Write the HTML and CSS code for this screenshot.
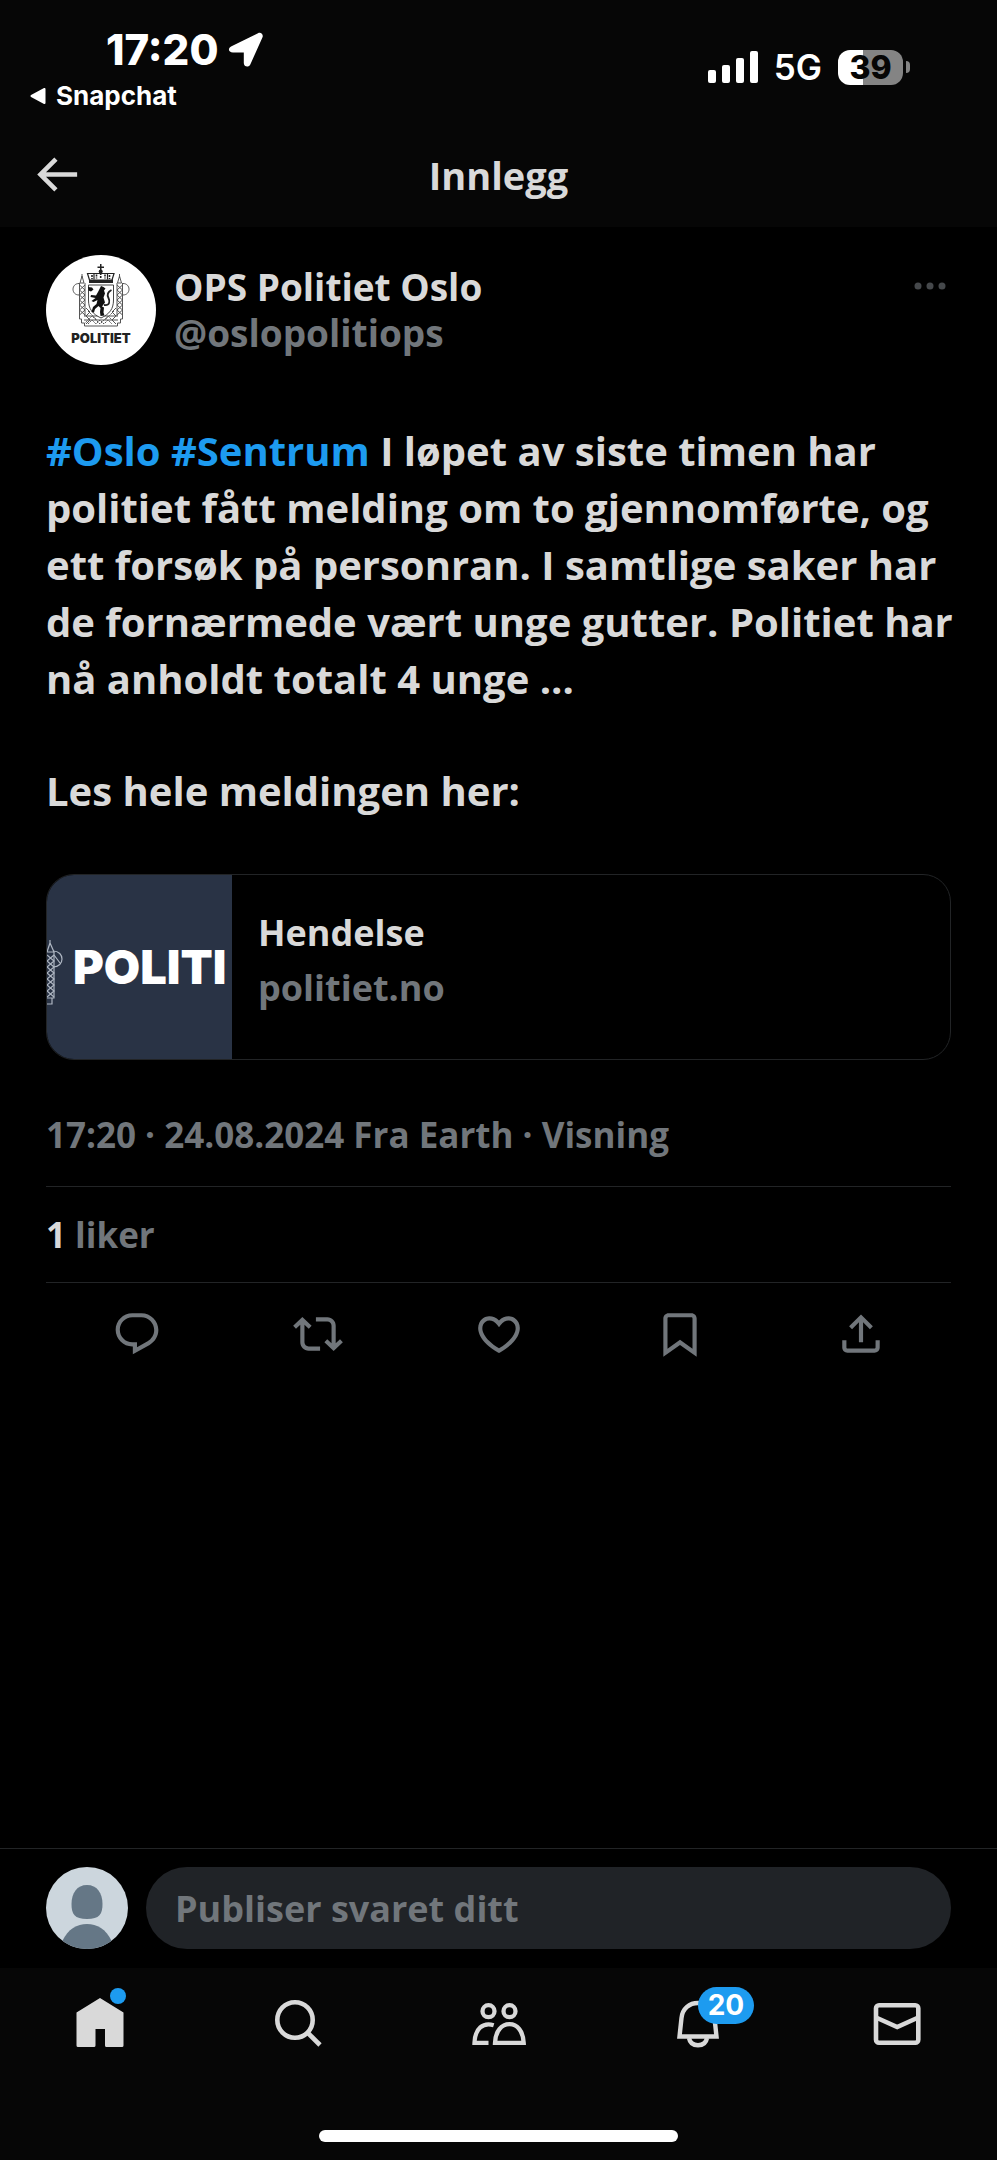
FILE: index.html
```html
<!DOCTYPE html>
<html lang="no">

<head>
  <meta charset="UTF-8">
  <meta name="viewport" content="width=device-width, initial-scale=1.0">
  <title>Innlegg</title>
  <link rel="stylesheet" href="styles.css">
</head>

<body>
  <header class="top">
    <div class="status-bar">
      <div class="status-left">
        <div class="clock">
          <span>17:20</span>
          <svg width="36" height="36" viewBox="0 0 36 36" aria-hidden="true">
            <path d="M3.500 14.200 30 1.200c3-1.400 5.800 1.300 4.400 4.400L22.300 32.500c-1.600 3.400-6.500 2.500-6.500-1.500V20.500H5C.4 20.500-.6 16.200 3.500 14.200z" fill="#fff"/>
          </svg>
        </div>
        <a href="#" class="back-app">
          <svg width="16" height="16" viewBox="0 0 16 16" aria-hidden="true">
            <path d="M14.500 1v14L1.500 8z" fill="#fff" stroke="#fff" stroke-width="2" stroke-linejoin="round"/>
          </svg>
          <span>Snapchat</span>
        </a>
      </div>
      <div class="status-right">
        <svg width="50" height="32" viewBox="0 0 50 32" fill="#fff" aria-hidden="true">
          <rect x="0" y="19" width="8" height="13" rx="2"/>
          <rect x="14" y="14" width="8" height="18" rx="2"/>
          <rect x="28" y="7" width="8" height="25" rx="2"/>
          <rect x="42" y="0" width="8" height="32" rx="2"/>
        </svg>
        <span class="network">5G</span>
        <div class="battery">
          <span class="battery-level">39</span>
          <span class="battery-tip"></span>
        </div>
      </div>
    </div>

    <div class="title-bar">
      <button class="icon-button" aria-label="Tilbake">
        <svg width="55" height="55" viewBox="0 0 24 24" fill="currentColor">
          <path d="M7.414 13l5.043 5.040-1.414 1.420L3.586 12l7.457-7.460 1.414 1.420L7.414 11H21v2H7.414z"/>
        </svg>
      </button>
      <h1>Innlegg</h1>
    </div>
  </header>

  <main class="post">
    <div class="author">
      <svg class="avatar" width="110" height="110" viewBox="0 0 110 110" role="img" aria-label="Politiet">
        <circle cx="55" cy="55" r="55" fill="#fff"/>
        <!-- crown -->
        <g fill="#222">
          <path d="M54 9h1.500v2.500H58V13h-2.500v2.500H54V13h-2.500v-1.500H54z"/>
          <circle cx="54.700" cy="16.500" r="2"/>
          <path d="M43 24.500h24v3.500H43z"/>
        </g>
        <path d="M43.500 25 41.500 18.500h26.500L66 25M48 18.500v6M61.500 18.500v6" fill="none" stroke="#222" stroke-width="1.200"/>
        <path d="M46 20v4M50.500 19.500v4M54.700 18v6M59 19.500v4M63.500 20v4" stroke="#222" stroke-width="1.600" stroke-dasharray="2 1"/>
        <!-- fasces, axes and lower lattice -->
        <g fill="none" stroke="#555" stroke-width="1">
          <path d="M36 19v4M34 28l2-7 2 7zM73.500 19v4M71.500 28l2-7 2 7z"/>
          <path d="M33.500 28v33M39 28v33M71 28v33M76.500 28v33"/>
          <path d="M33.500 30l5.500 5-5.500 5 5.500 5-5.500 5 5.500 5-5.500 5M39 30l-5.500 5 5.500 5-5.500 5 5.500 5-5.500 5 5.500 5M71 30l5.500 5-5.500 5 5.500 5-5.500 5 5.500 5-5.500 5M76.500 30l-5.500 5 5.500 5-5.500 5 5.500 5-5.500 5 5.500 5"/>
          <path d="M33 28.500c-8 0-8 11.500 0 11.500M77 28.500c8 0 8 11.500 0 11.500"/>
          <path d="M33.500 61v3h2v4h3v3h33v-3h3v-4h2v-3"/>
          <path d="M38 61h34M38 65h34M40 53l4 4-4 4 4 4-4 4M70 53l-4 4 4 4-4 4 4 4"/>
          <path d="M38 69l4-4 4-4 4 4 4 4 4-4 4-4 4 4 4 4M42 69l4-4 4 4 4-4 4 4 4-4 4 4M42 56l5 5 4 4M68 56l-5 5-4 4" stroke-dasharray="2 1"/>
        </g>
        <!-- shield with lion -->
        <path d="M42.500 30h25v15c0 9-4 14-12.500 18-8.500-4-12.500-9-12.500-18z" fill="#fff" stroke="#444" stroke-width="1"/>
        <path d="M55 31l2.500 1 2 1.500-1.500 2 1 3-1.500 4 1.500 5-3 4 2 1-.5 5 1 3-4 .5-.5-4 .5-4-2-2-3.500 3-1 3.500-2.500-.5 1.500-5 3.500-3 1-4-4 2-2-1 4-3-5-1 .5-2 5 .5 2-3.500z" fill="#111"/>
        <path d="M42 32l4 .5 1.500 2-2.500 2-2.500-1z" fill="#111"/>
        <path d="M58 50c6 1 6-4 4.500-7-1.500-3-1-6 3-8" fill="none" stroke="#222" stroke-width="1.800"/>
        <text class="logo-small" x="55" y="88" text-anchor="middle">POLITIET</text>
      </svg>
      <div class="names">
        <a href="#" class="name">OPS Politiet Oslo</a>
        <a href="#" class="handle">@oslopolitiops</a>
      </div>
      <button class="icon-button more" aria-label="Mer">
        <svg width="34" height="10" viewBox="0 0 34 10" fill="#45484b">
          <circle cx="5" cy="5" r="3.500"/>
          <circle cx="17" cy="5" r="3.500"/>
          <circle cx="29" cy="5" r="3.500"/>
        </svg>
      </button>
    </div>

    <div class="text">
      <p><a href="#">#Oslo</a> <a href="#">#Sentrum</a> I løpet av siste timen har politiet fått melding om to gjennomførte, og ett forsøk på personran. I samtlige saker har de fornærmede vært unge gutter. Politiet har nå anholdt totalt 4 unge ...</p>
      <p>Les hele meldingen her:</p>
    </div>

    <a href="#" class="link-card">
      <svg class="thumb" width="185" height="184" viewBox="0 0 185 184" role="img" aria-label="Politiet">
        <rect width="185" height="184" fill="#293345"/>
        <g fill="none" stroke="#aeb6c2" stroke-width="1.200">
          <path d="M3 65v5M0 77l3-9 4 9zM0 77h7v46H0M5 123v6H0"/>
          <path d="M0 80l7 6-7 6 7 6-7 6 7 6-7 6 7 6M7 80l-7 6 7 6-7 6 7 6-7 6 7 6-7 6"/>
          <path d="M6 76c12 0 12 16 0 16M7 80l6 8"/>
        </g>
        <text class="logo-large" x="26" y="109">POLITI</text>
      </svg>
      <div class="link-info">
        <span class="link-title">Hendelse</span>
        <span class="link-domain">politiet.no</span>
      </div>
    </a>

    <div class="meta">17:20 · 24.08.2024 Fra Earth · Visning</div>
    <div class="likes"><strong>1</strong> liker</div>

    <div class="actions">
      <button class="icon-button" aria-label="Svar">
        <svg width="50" height="50" viewBox="0 0 24 24" fill="currentColor">
          <path d="M1.751 10c0-4.420 3.584-8 8.005-8h4.366c4.490 0 8.129 3.640 8.129 8.130 0 2.960-1.607 5.680-4.196 7.110l-8.054 4.460v-3.690h-.067c-4.490.1-8.183-3.510-8.183-8.010zm8.005-6c-3.317 0-6.005 2.690-6.005 6 0 3.370 2.770 6.080 6.138 6.010l.351-.010h1.761v2.300l5.087-2.810c1.951-1.080 3.163-3.130 3.163-5.360 0-3.390-2.744-6.130-6.129-6.130H9.756z"/>
        </svg>
      </button>
      <button class="icon-button" aria-label="Del på nytt">
        <svg width="50" height="50" viewBox="0 0 24 24" fill="currentColor">
          <path d="M4.500 3.880l4.432 4.140-1.364 1.460L5.500 7.550V16c0 1.100.896 2 2 2H13v2H7.500c-2.209 0-4-1.790-4-4V7.550L1.432 9.480.068 8.020 4.500 3.880zM16.500 6H11V4h5.500c2.209 0 4 1.790 4 4v8.450l2.068-1.930 1.364 1.460-4.432 4.140-4.432-4.140 1.364-1.460 2.068 1.930V8c0-1.100-.896-2-2-2z"/>
        </svg>
      </button>
      <button class="icon-button" aria-label="Lik">
        <svg width="50" height="50" viewBox="0 0 24 24" fill="currentColor">
          <path d="M16.697 5.500c-1.222-.06-2.679.51-3.890 2.160l-.805 1.090-.806-1.090C9.984 6.010 8.526 5.440 7.304 5.500c-1.243.07-2.349.78-2.910 1.910-.552 1.120-.633 2.780.479 4.820 1.074 1.970 3.257 4.270 7.129 6.610 3.870-2.340 6.052-4.640 7.126-6.610 1.111-2.040 1.030-3.700.477-4.820-.561-1.130-1.666-1.840-2.908-1.910zm4.187 7.690c-1.351 2.480-4.001 5.120-8.379 7.670l-.503.3-.504-.3c-4.379-2.550-7.029-5.190-8.382-7.670-1.360-2.500-1.410-4.860-.514-6.670.887-1.790 2.647-2.910 4.601-3.010 1.651-.09 3.368.56 4.798 2.010 1.429-1.450 3.146-2.100 4.796-2.010 1.954.1 3.714 1.220 4.601 3.010.896 1.810.846 4.170-.514 6.670z"/>
        </svg>
      </button>
      <button class="icon-button" aria-label="Bokmerke">
        <svg width="50" height="50" viewBox="0 0 24 24" fill="currentColor">
          <path d="M4 4.500C4 3.120 5.119 2 6.500 2h11C18.881 2 20 3.120 20 4.500v18.440l-8-5.710-8 5.710V4.500zM6.500 4c-.276 0-.5.22-.5.5v14.560l6-4.290 6 4.290V4.500c0-.28-.224-.5-.5-.5h-11z"/>
        </svg>
      </button>
      <button class="icon-button" aria-label="Del">
        <svg width="50" height="50" viewBox="0 0 24 24" fill="currentColor">
          <path d="M12 2.590l5.700 5.700-1.410 1.420L13 6.410V16h-2V6.410l-3.300 3.300-1.410-1.420L12 2.590zM21 15l-.02 3.510c0 1.380-1.120 2.490-2.500 2.490H5.500C4.110 21 3 19.880 3 18.500V15h2v3.500c0 .28.22.5.5.5h12.980c.28 0 .5-.22.5-.5L19 15h2z"/>
        </svg>
      </button>
    </div>
  </main>

  <form class="composer">
    <svg class="user" width="82" height="82" viewBox="0 0 82 82" aria-hidden="true">
      <circle cx="41" cy="41" r="41" fill="#ccd6dd"/>
      <path d="M41 18c10 0 15.500 8 15.500 19 0 10-3 15-15.500 15s-15.500-5-15.500-15C25.500 26 31 18 41 18z" fill="#657786"/>
      <path d="M16.500 73.800C22 62 31 57 41 57s19 5 24.500 16.800C58 79.500 50 82 41 82s-17-2.500-24.500-8.200z" fill="#657786"/>
    </svg>
    <input type="text" class="reply" placeholder="Publiser svaret ditt" aria-label="Publiser svaret ditt">
  </form>

  <footer class="bottom">
    <nav class="tabs">
      <a href="#" class="tab" aria-label="Hjem">
        <svg width="54" height="54" viewBox="0 0 54 54" fill="currentColor">
          <path d="M27 1 50.500 15.500V48.500q0 1.500-1.500 1.500H33.500q-1.500 0-1.500-1.500V32H22.500V48.500q0 1.500-1.500 1.500H5q-1.500 0-1.500-1.500V15.500z"/>
        </svg>
        <span class="dot"></span>
      </a>
      <a href="#" class="tab" aria-label="Søk">
        <svg width="54" height="54" viewBox="0 0 54 54" fill="none" stroke="currentColor" stroke-width="4.600">
          <circle cx="23" cy="23" r="17.700"/>
          <path d="M35.500 35.500 48 48"/>
        </svg>
      </a>
      <a href="#" class="tab" aria-label="Fellesskap">
        <svg width="54" height="54" viewBox="0 0 54 54" fill="none" stroke="currentColor" stroke-width="4.300">
          <circle cx="16.500" cy="14.200" r="6"/>
          <circle cx="37.500" cy="14.200" r="6"/>
          <path d="M23 45.800h28.700C51 34 45.500 27.200 37.500 27.200S23.500 34 23 45.800z"/>
          <path d="M21.700 28.200C11 25 3 31.500 2.500 45.800h14"/>
        </svg>
      </a>
      <a href="#" class="tab" aria-label="Varslinger, 20 nye">
        <svg width="54" height="54" viewBox="0 0 54 54" fill="none" stroke="currentColor" stroke-width="4.400">
          <path d="M8.500 39.500 10.500 21C11.500 11.500 18.500 6 27 6s15.500 5.500 16.500 15l2 18.500z"/>
          <path d="M18 41c.8 4.500 4.200 7.200 9 7.200s8.200-2.700 9-7.200"/>
        </svg>
        <span class="badge">20</span>
      </a>
      <a href="#" class="tab" aria-label="Meldinger">
        <svg width="54" height="54" viewBox="0 0 54 54" fill="none" stroke="currentColor" stroke-width="4.600">
          <rect x="6" y="8.300" width="42.300" height="37.500" rx="3"/>
          <path d="M6 20.500 27.200 30 48.300 20.500"/>
        </svg>
      </a>
    </nav>
    <div class="home-indicator"></div>
  </footer>
</body>

</html>
```
FILE: styles.css
```css
* {
  box-sizing: border-box;
}

body {
  margin: 0;
  min-height: 100vh;
  display: flex;
  flex-direction: column;
  background-color: #000;
  color: #d9d9d9;
  font-family: "Open Sans", "Noto Sans", sans-serif;
  font-weight: bold;
}

a {
  color: inherit;
  text-decoration: none;
}

svg {
  display: block;
}

.icon-button {
  background: none;
  border: 0;
  padding: 0;
  color: inherit;
  cursor: pointer;
}

/* Status bar and title */
.top {
  background-color: #060606;
}

.status-bar {
  display: flex;
  justify-content: space-between;
  padding: 30px 87px 0 30px;
  color: #fff;
  font-family: Inter, sans-serif;
}

.clock {
  display: flex;
  align-items: center;
  gap: 10px;
  padding-left: 76px;
  font-size: 42px;
  font-weight: 800;
  line-height: 40px;
}

.back-app {
  display: flex;
  align-items: center;
  gap: 10px;
  margin-top: 10px;
  font-size: 26px;
  line-height: 32px;
}

.status-right {
  display: flex;
  align-items: center;
  height: 34px;
  margin-top: 20px;
}

.network {
  margin: 0 16px;
  font-size: 35px;
  font-weight: 600;
}

.battery {
  display: flex;
  align-items: center;
  gap: 3px;
}

.battery-level {
  width: 65px;
  border-radius: 12px;
  background: linear-gradient(to right, #fff 39%, #848484 39%);
  color: #060606;
  font-size: 32px;
  font-weight: 800;
  line-height: 35px;
  text-align: center;
}

.battery-tip {
  width: 4px;
  height: 12px;
  border-radius: 0 6px 6px 0;
  background-color: #848484;
}

.title-bar {
  display: grid;
  grid-template-columns: 1fr auto 1fr;
  align-items: center;
  height: 115px;
  padding: 10px 29px 0;
}

.title-bar .icon-button {
  justify-self: start;
}

.title-bar h1 {
  margin: 0;
  font-size: 38px;
}

/* Post */
.post {
  flex: 1;
  padding: 28px 46px;
}

.author {
  display: flex;
  align-items: flex-start;
  gap: 18px;
}

.avatar {
  flex-shrink: 0;
}

.logo-small {
  font: 900 13px Inter, sans-serif;
  fill: #222;
}

.names {
  display: flex;
  flex-direction: column;
  flex: 1;
  padding-top: 9px;
  font-size: 37px;
  line-height: 46px;
}

.handle,
.link-domain,
.meta,
.likes,
.actions {
  color: #71767b;
}

.more {
  padding: 26px 4px;
}

.text {
  margin: 57px -8px 0 0;
  font-size: 40px;
  line-height: 57px;
}

.text p {
  margin: 0 0 55px;
}

.text a {
  color: #1d9bf0;
}

.link-card {
  display: flex;
  border: 1px solid #222426;
  border-radius: 28px;
  overflow: hidden;
  font-size: 36px;
  line-height: 55px;
}

.thumb {
  flex-shrink: 0;
}

.logo-large {
  font: 900 47px Inter, sans-serif;
  fill: #fff;
}

.link-info {
  display: flex;
  flex-direction: column;
  padding: 30px 26px;
}

.meta,
.likes {
  border-bottom: 1px solid #222426;
  font-size: 35px;
  line-height: 40px;
}

.meta {
  margin-top: 55px;
  padding-bottom: 31px;
}

.likes {
  padding: 28px 0 27px;
}

.likes strong {
  color: #d9d9d9;
  font-weight: inherit;
}

.actions {
  display: flex;
  justify-content: space-around;
  padding-top: 26px;
}

.actions .icon-button {
  flex: 1;
  display: flex;
  justify-content: center;
}

/* Reply field */
.composer {
  display: flex;
  gap: 18px;
  padding: 18px 46px 19px;
  border-top: 1px solid #222426;
}

.user {
  flex-shrink: 0;
}

.reply {
  flex: 1;
  min-width: 0;
  height: 82px;
  padding: 0 29px;
  border: 0;
  border-radius: 41px;
  background-color: #202327;
  color: #d9d9d9;
  font: inherit;
  font-size: 36px;
}

.reply::placeholder {
  color: #71767b;
  opacity: 1;
}

/* Bottom navigation */
.bottom {
  padding: 29px 0 18px;
  background-color: #060606;
}

.tabs {
  display: flex;
}

.tab {
  position: relative;
  flex: 1;
  display: flex;
  justify-content: center;
}

.dot {
  position: absolute;
  top: -9px;
  left: calc(50% + 10px);
  width: 16px;
  height: 16px;
  border-radius: 50%;
  background-color: #1d9bf0;
}

.badge {
  position: absolute;
  top: -10px;
  left: 50%;
  width: 56px;
  border-radius: 19px;
  background-color: #1d9bf0;
  color: #fff;
  font-family: Inter, sans-serif;
  font-size: 28px;
  line-height: 37px;
  text-align: center;
}

.home-indicator {
  width: 36%;
  height: 12px;
  margin: 79px auto 0;
  border-radius: 6px;
  background-color: #fff;
}
```
